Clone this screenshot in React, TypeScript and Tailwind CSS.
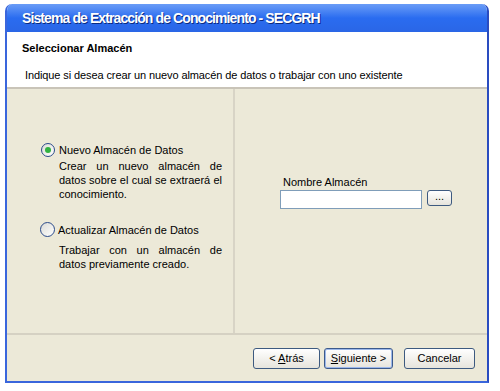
import React from "react";

function Btn({ children, def = false }: { children: React.ReactNode; def?: boolean }) {
  return (
    <button
      className={`h-[21px] rounded-[3px] border ${def ? "border-[#3c5a8c] shadow-[inset_0_0_0_1px_#9cb8ea]" : "border-[#3d5a80]"} bg-gradient-to-b from-white to-[#e6e4dc] text-[11px] text-black`}
    >
      {children}
    </button>
  );
}

export default function App() {
  return (
    <div className="w-[500px] h-[391px] bg-white relative" style={{ fontFamily: "'Liberation Sans', sans-serif" }}>
      <div className="absolute left-[5px] top-[4px] w-[484px] h-[379px] flex flex-col rounded-t-[7px] overflow-hidden border-x-[2px] border-b-[2px] border-x-[#3a66dc] border-b-[#3a66dc] border-r-[#2a4cc0]">
        <div className="h-[28px] shrink-0 bg-gradient-to-b from-[#6a9cf6] via-[#2a6cf0] to-[#2a66e6] flex items-center pl-[15px]">
          <span className="text-white font-bold text-[14px] tracking-[-0.9px] [text-shadow:1px_1px_0_#0a2a80]">
            Sistema de Extracción de Conocimiento - SECGRH
          </span>
        </div>
        <div className="flex-1 flex flex-col bg-[#ece9d8]">
          <div className="bg-white h-[57px] shrink-0 border-b-[2px] border-[#c9c4b8] flex flex-col pl-[15px]">
            <div className="text-[11px] leading-[14px] font-bold text-black mt-[9px]">Seleccionar Almacén</div>
            <div className="text-[11px] leading-[14px] text-black mt-[13px] pl-[3px] tracking-[-0.1px]">Indique si desea crear un nuevo almacén de datos o trabajar con uno existente</div>
          </div>
          <div className="h-[246px] shrink-0 flex border-b-[2px] border-[#d5d1c3]">
            <div className="w-[228px] border-r-[2px] border-[#d8d4c6] pl-[34px] pt-[54px] text-[11px] leading-[14px]">
              <div className="flex items-center gap-[4px] h-[14px]">
                <span className="w-[14px] h-[14px] rounded-full border border-[#2a4a8a] bg-gradient-to-br from-[#dcdcd6] to-white flex items-center justify-center">
                  <span className="w-[6px] h-[6px] rounded-full bg-[#31b241]" />
                </span>
                <span>Nuevo Almacén de Datos</span>
              </div>
              <div className="ml-[18px] mt-[2px] w-[163px] text-justify [text-align-last:left]">
                Crear un nuevo almacén de datos sobre el cual se extraerá el conocimiento.
              </div>
              <div className="flex items-center gap-[3px] mt-[21px] -ml-[1px] h-[15px]">
                <span className="w-[15px] h-[15px] rounded-full border border-[#2a4a8a] bg-gradient-to-br from-[#dcdcd6] to-white" />
                <span>Actualizar Almacén de Datos</span>
              </div>
              <div className="ml-[18px] mt-[6px] w-[163px] text-justify [text-align-last:left]">
                Trabajar con un almacén de datos previamente creado.
              </div>
            </div>
            <div className="flex-1 pl-[45px] pt-[86px]">
              <div className="text-[11px] ml-[3px] leading-[14px]">Nombre Almacén</div>
              <div className="flex items-start gap-[5px] mt-[1px]">
                <div className="w-[142px] h-[19px] bg-white border border-[#7f9db9]" />
                <button className="w-[25px] h-[16px] rounded-[3px] border border-[#3d5a80] bg-gradient-to-b from-white to-[#e6e4dc] text-[11px] leading-[8px] pb-[4px]">...</button>
              </div>
            </div>
          </div>
          <div className="flex-1 flex items-start justify-end pr-[12px] pt-[10px]">
            <div className="w-[67px]"><Btn><span className="inline-block w-[65px]">&lt; <u>A</u>trás</span></Btn></div>
            <div className="w-[69px] ml-[4px]"><Btn def><span className="inline-block w-[67px]"><u>S</u>iguiente &gt;</span></Btn></div>
            <div className="w-[71px] ml-[11px]"><Btn><span className="inline-block w-[69px]">Cancelar</span></Btn></div>
          </div>
        </div>
      </div>
    </div>
  );
}
